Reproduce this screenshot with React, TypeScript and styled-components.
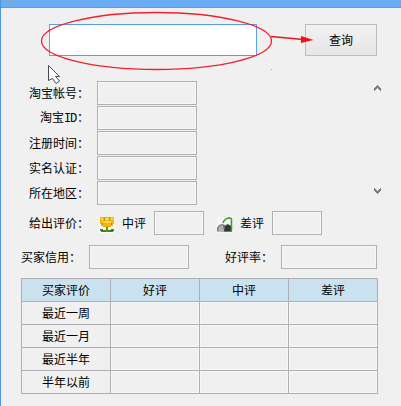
import React from 'react';
import styled, { createGlobalStyle } from 'styled-components';

const GlobalStyle = createGlobalStyle`
  html, body {
    margin: 0;
    padding: 0;
    background: #f0f0f0;
  }
  * {
    box-sizing: border-box;
  }
`;

const Window = styled.div`
  position: relative;
  width: 401px;
  height: 406px;
  overflow: hidden;
  background: #f0f0f0;
  border-left: 1px solid #4f94e0;
  color: #000;
  font: 12px/14px "Noto Sans CJK SC", "Liberation Sans", sans-serif;
`;

const TitleBar = styled.div`
  height: 8px;
  background: #6aadf6;
  border-bottom: 1px solid #5b9be6;
`;

const TitleIcon = styled.span`
  display: block;
  width: 8px;
  height: 2px;
  margin-left: 4px;
  background: #8fa4bd;
  border-radius: 0 0 4px 4px;
`;

const Content = styled.div`
  display: flex;
  flex-direction: column;
  padding: 16px 0 0 20px;
`;

const SearchRow = styled.div`
  display: flex;
  gap: 48px;
  padding-left: 28px;
`;

const SearchInput = styled.div`
  width: 208px;
  height: 32px;
  background: #fff;
  border: 1px solid #5b9fe4;
`;

const QueryButton = styled.div`
  display: flex;
  align-items: center;
  justify-content: center;
  width: 72px;
  height: 32px;
  border: 1px solid #bdbdbd;
  background: linear-gradient(#f2f2f2, #e6e6e6);
`;

const FieldsArea = styled.div`
  display: flex;
  justify-content: space-between;
  margin-top: 25px;
  width: 360px;
`;

const FieldList = styled.div`
  display: flex;
  flex-direction: column;
  gap: 1px;
`;

const FieldRow = styled.div`
  display: flex;
  align-items: center;
  gap: 8px;
`;

const FieldLabel = styled.span`
  width: 68px;
  text-align: right;
  white-space: nowrap;
`;

const Latin = styled.span`
  font-family: "Liberation Mono", monospace;
  letter-spacing: -1.2px;
  margin-right: 1px;
`;

const TextBox = styled.div<{ $width: number }>`
  width: ${p => p.$width}px;
  height: 24px;
  flex: none;
  background: #f0f0f0;
  border: 1px solid #b0b0b4;
  box-shadow: inset 0 0 0 1px #f7f7f7;
`;

const Scroller = styled.div`
  display: flex;
  flex-direction: column;
  justify-content: space-between;
  padding: 4px 0 11px;
  color: #7c7c7c;
`;

const EvalRow = styled.div`
  display: flex;
  align-items: center;
  margin: 6px 0 0 8px;
  height: 24px;
`;

const EvalLabel = styled.span`
  width: 70px;
  white-space: nowrap;
`;

const Rating = styled.div`
  display: flex;
  align-items: center;
  margin-right: 13px;
`;

const RatingText = styled.span`
  margin: 0 8px 0 7px;
  white-space: nowrap;
`;

const IconSlot = styled.span`
  display: block;
  width: 16px;
  height: 16px;
  margin-top: 3px;
`;

const CreditRow = styled.div`
  display: flex;
  align-items: center;
  margin-top: 10px;
`;

const CreditLabel = styled.span<{ $width: number; $offset?: number }>`
  width: ${p => p.$width}px;
  margin-left: ${p => p.$offset || 0}px;
  white-space: nowrap;
`;

const Table = styled.div`
  display: grid;
  grid-template-columns: repeat(4, 89px);
  grid-auto-rows: 23px;
  width: 357px;
  margin-top: 9px;
  border-top: 1px solid #aeaeb4;
  border-left: 1px solid #aeaeb4;
`;

const Cell = styled.div<{ $head?: boolean; $empty?: boolean }>`
  display: flex;
  align-items: center;
  justify-content: center;
  border-right: 1px solid #aeaeb4;
  border-bottom: 1px solid #aeaeb4;
  background: ${p => (p.$head ? '#cae2ef' : '#f0f0f0')};
  box-shadow: ${p => (p.$empty ? 'inset 0 0 0 1px #f7f7f7' : 'none')};
`;

const Overlay = styled.svg`
  position: absolute;
  top: 0;
  left: -1px;
  pointer-events: none;
`;

const Flower = () => (
  <svg width="16" height="16" viewBox="0 0 16 16" shapeRendering="crispEdges">
    <rect width="16" height="16" fill="#fbfaf2" />
    <rect x="1" y="0" width="14" height="7" fill="#f3b40e" />
    <rect x="2" y="7" width="12" height="2" fill="#f3b40e" />
    <rect x="4" y="9" width="8" height="1" fill="#eda90c" />
    <path d="M2 1h2v2H2zM6 1h4v2H6zM12 1h2v2h-2zM4 4h8v2H4z" fill="#fcdc4e" />
    <path d="M5 0h1v4H5zM10 0h1v4h-1zM3 6h1v2H3zM12 6h1v2h-1z" fill="#d08f08" />
    <rect x="7" y="10" width="2" height="5" fill="#4d9a24" />
    <path d="M1 12h3v1h3v2H2v-1H1zM15 12h-3v1H9v2h5v-1h1z" fill="#2f8a1c" />
  </svg>
);

const Rock = () => (
  <svg width="16" height="16" viewBox="0 0 16 16">
    <rect width="16" height="16" fill="#f6f6f2" />
    <path d="M0 14.500V11l2-3 3-1 3 1 3-1 4 2v5.500z" fill="#767876" />
    <path d="M1 14l1-4 2-2 2 1 1 5z" fill="#b0b2b0" />
    <path d="M7 14.500l1-5 3-2 3 2 1 5z" fill="#2a3d2c" />
    <path d="M6 6c1-3 4-5 7-5l1.500 1v12" stroke="#3f9a2a" strokeWidth="1.5" fill="none" />
  </svg>
);

const Chevron = ({ up }: { up?: boolean }) => (
  <svg width="7" height="6" viewBox="0 0 7 6" shapeRendering="crispEdges">
    <path
      d={
        up
          ? 'M3 0h1v1h1v1h1v1h1v3H6V5H5V4H4V3H3v1H2v1H1v1H0V3h1V2h1V1h1z'
          : 'M0 0h1v1h1v1h1v1h1V2h1V1h1V0h1v3H6v1H5v1H4v1H3V5H2V4H1V3H0z'
      }
      fill="currentColor"
    />
  </svg>
);

const fields: React.ReactNode[] = [
  '淘宝帐号：',
  <>淘宝<Latin>ID</Latin>：</>,
  '注册时间：',
  '实名认证：',
  '所在地区：'
];

const columns = ['买家评价', '好评', '中评', '差评'];
const periods = ['最近一周', '最近一月', '最近半年', '半年以前'];

const App: React.FC = () => (
  <Window>
    <GlobalStyle />
    <TitleBar>
      <TitleIcon />
    </TitleBar>
    <Content>
      <SearchRow>
        <SearchInput />
        <QueryButton>查询</QueryButton>
      </SearchRow>

      <FieldsArea>
        <FieldList>
          {fields.map((label, i) => (
            <FieldRow key={i}>
              <FieldLabel>{label}</FieldLabel>
              <TextBox $width={100} />
            </FieldRow>
          ))}
        </FieldList>
        <Scroller>
          <Chevron up />
          <Chevron />
        </Scroller>
      </FieldsArea>

      <EvalRow>
        <EvalLabel>给出评价：</EvalLabel>
        <Rating>
          <IconSlot><Flower /></IconSlot>
          <RatingText>中评</RatingText>
          <TextBox $width={50} />
        </Rating>
        <Rating>
          <IconSlot><Rock /></IconSlot>
          <RatingText>差评</RatingText>
          <TextBox $width={50} />
        </Rating>
      </EvalRow>

      <CreditRow>
        <CreditLabel $width={68}>买家信用：</CreditLabel>
        <TextBox $width={100} />
        <CreditLabel $width={56} $offset={36}>好评率：</CreditLabel>
        <TextBox $width={96} />
      </CreditRow>

      <Table>
        {columns.map(c => (
          <Cell key={c} $head>{c}</Cell>
        ))}
        {periods.map(p => (
          <React.Fragment key={p}>
            <Cell>{p}</Cell>
            <Cell $empty />
            <Cell $empty />
            <Cell $empty />
          </React.Fragment>
        ))}
      </Table>
    </Content>

    <Overlay width="401" height="406" viewBox="0 0 401 406">
      <ellipse cx="156.5" cy="41" rx="115" ry="28.5" fill="none" stroke="#f5202e" strokeWidth="1.3" />
      <path d="M271 36.5L303 39.5" stroke="#f0101e" strokeWidth="1.3" />
      <path d="M301 36L313.5 40L301 43z" fill="#f50f1c" />
      <rect x="271" y="69" width="1" height="1" fill="#e8a0a8" />
      <path
        d="M48.5 65.5L59.5 76.5H55.5L59.5 81L56 83.5L52.5 78.5L48.5 80.5z"
        fill="#fff"
        stroke="#454a5c"
        strokeWidth="1"
      />
    </Overlay>
  </Window>
);

export default App;
